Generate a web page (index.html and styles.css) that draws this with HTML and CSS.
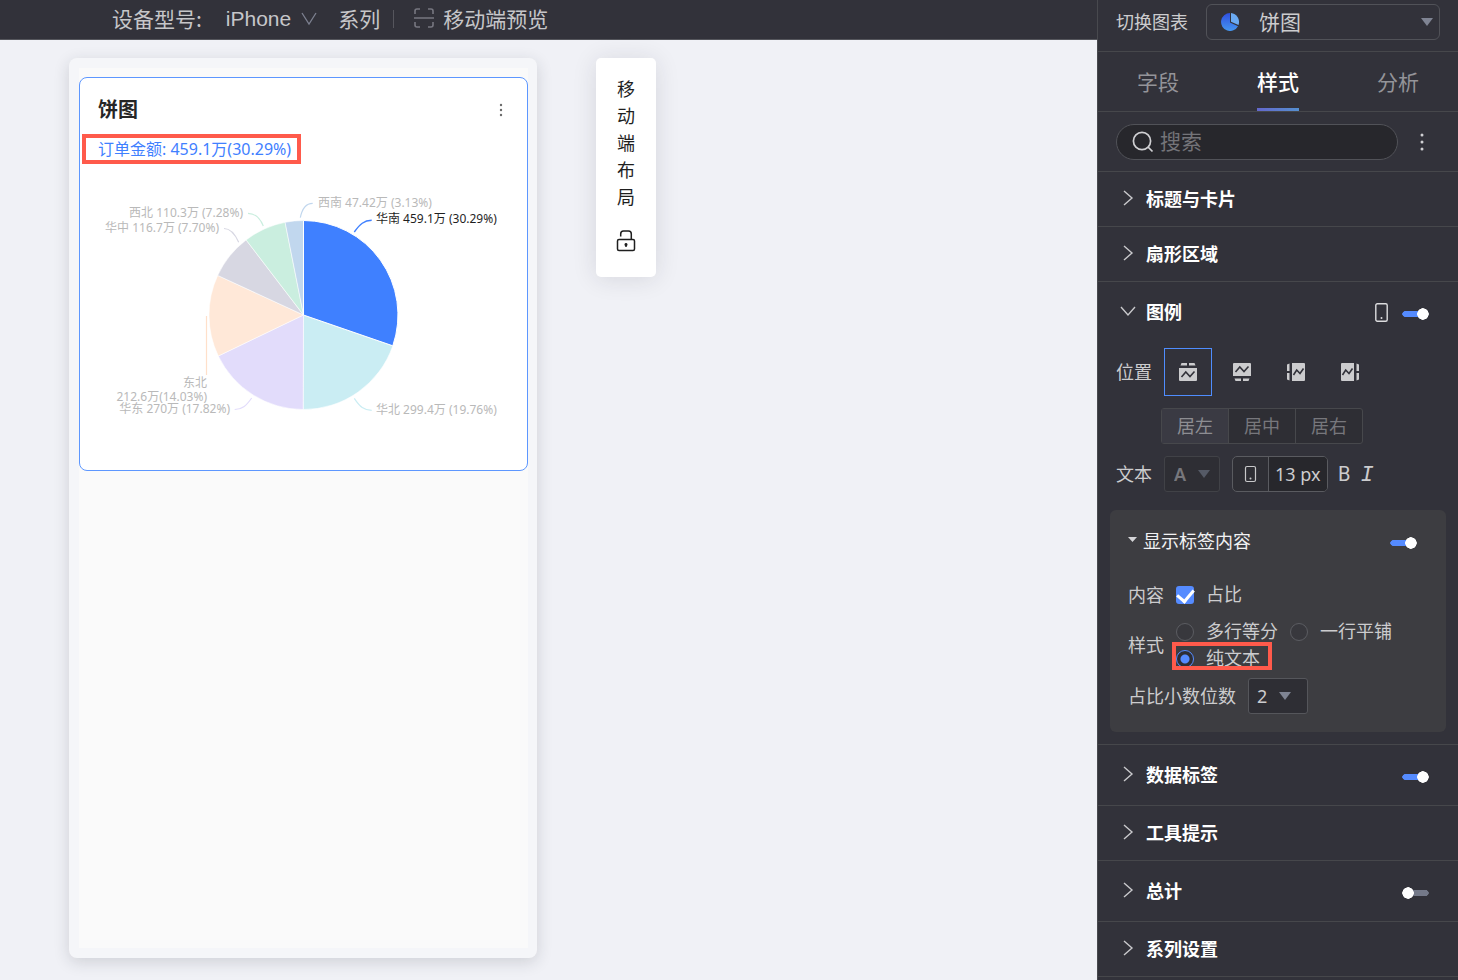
FILE: index.html
```html
<!DOCTYPE html>
<html lang="zh-CN">
<head>
<meta charset="utf-8">
<title>移动端布局</title>
<link rel="stylesheet" href="styles.css">
</head>
<body>
<div class="app">
  <main class="workspace">
    <header class="topbar">
      <span class="topbar-label">设备型号:</span>
      <button class="device" type="button">iPhone
        <svg width="16" height="14" viewBox="0 0 16 14"><path d="M1 1l7 11 7-11" fill="none" stroke="#7d8190" stroke-width="1.3"/></svg>
      </button>
      <span class="series">系列</span>
      <span class="bar"></span>
      <button class="preview" type="button">
        <svg width="20" height="20" viewBox="0 0 20 20"><path d="M1 6V3q0-2 2-2h3M14 1h3q2 0 2 2v3M1 14v3q0 2 2 2h3M14 19h3q2 0 2-2v-3M0 10h20" fill="none" stroke="#777780" stroke-width="1.6"/></svg>
        移动端预览
      </button>
    </header>
    <div class="canvas">
      <section class="phone">
        <div class="screen">
          <article class="chart-card">
            <div class="chart-head">
              <h2>饼图</h2>
              <button class="more" type="button" aria-label="更多"><svg width="4" height="14" viewBox="0 0 4 14" fill="#6b6b6b"><circle cx="2" cy="2" r="1.2"/><circle cx="2" cy="7" r="1.2"/><circle cx="2" cy="12" r="1.2"/></svg></button>
            </div>
            <p class="legend">订单金额: 459.1万(30.29%)<span class="mark mark-legend"></span></p>
            <svg class="pie" viewBox="0 0 447 300">
              <g stroke="#fff" stroke-opacity=".55" stroke-width="1">
                <path fill="#caedf3" d="M223.5 145L312.8 175.8A94.5 94.5 0 0 1 223.2 239.5z"/>
                <path fill="#e2dcfb" d="M223.5 145L223.2 239.5A94.5 94.5 0 0 1 138.3 186z"/>
                <path fill="#ffe8d8" d="M223.5 145L138.3 186A94.5 94.5 0 0 1 137.7 105.4z"/>
                <path fill="#d7d7e2" d="M223.5 145L137.7 105.4A94.5 94.5 0 0 1 166.1 69.9z"/>
                <path fill="#caeedf" d="M223.5 145L166.1 69.9A94.5 94.5 0 0 1 205.1 52.3z"/>
                <path fill="#c1d7ee" d="M223.5 145L205.1 52.3A94.5 94.5 0 0 1 223.5 50.5z"/>
              </g>
              <path fill="#3f80ff" stroke="#fff" d="M223.5 145L223.5 50.5A94.5 94.5 0 0 1 312.8 175.8z"/>
              <g fill="none" stroke-width="1.2">
                <path stroke="#c1d7ee" d="M220.3 47.7C222 39 226 33.3 232.7 33.3"/>
                <path stroke="#3f80ff" stroke-width="1.4" d="M274.3 62C280 54 284 50.5 291.7 50.3"/>
                <path stroke="#caeedf" d="M168 43.3C176 43.5 180 48 183.3 56"/>
                <path stroke="#d7d7e2" d="M144 58.5C151 58.5 155 64 158.7 72.3"/>
                <path stroke="#ffe0ca" d="M126.5 146V205"/>
                <path stroke="#e2dcfb" d="M154.7 239.5C162 239.5 166 236 171.7 228"/>
                <path stroke="#caedf3" d="M274.3 228.3C280 237 284 240 291.7 240.3"/>
              </g>
              <g class="pie-labels">
                <text x="238" y="37">西南 47.42万 (3.13%)</text>
                <text class="active" x="296" y="53">华南 459.1万 (30.29%)</text>
                <text class="left" x="163" y="47">西北 110.3万 (7.28%)</text>
                <text class="left" x="139" y="62">华中 116.7万 (7.70%)</text>
                <text class="left" x="127" y="217">东北</text>
                <text class="left" x="127" y="231">212.6万(14.03%)</text>
                <text class="left" x="150" y="243">华东 270万 (17.82%)</text>
                <text x="296" y="244">华北 299.4万 (19.76%)</text>
              </g>
            </svg>
          </article>
        </div>
      </section>
      <aside class="layout-tool">
        <span>移动端布局</span>
        <button type="button" aria-label="锁定"><svg width="20" height="22" viewBox="0 0 20 22" fill="none" stroke="#1f1f1f" stroke-width="1.5"><rect x="1.5" y="9.5" width="17" height="11" rx="1.5"/><path d="M4.7 6.6V4Q4.7 1 7.5 1H12.500Q15.300 1 15.300 4V9.500M10 13.500v3.500"/><circle cx="10" cy="14.500" r=".8"/></svg></button>
      </aside>
    </div>
  </main>

  <aside class="panel">
    <div class="switch-row">
      <label for="chart-type">切换图表</label>
      <div class="select-box chart-select">
        <svg class="pie-icon" width="18" height="18" viewBox="0 0 18 18"><defs><linearGradient id="pieBlue" x1="0" y1="0" x2="0" y2="1"><stop offset="0" stop-color="#2f4fe0"/><stop offset="1" stop-color="#4596ee"/></linearGradient></defs><path fill="url(#pieBlue)" d="M9 0A9 9 0 1 0 17 13.200L9 9.500z"/><path fill="#6baaf2" d="M10 0A9 9 0 0 1 17.500 12L10 8.700z"/></svg>
        <select id="chart-type"><option>饼图</option></select>
        <svg class="caret" width="12" height="8" viewBox="0 0 12 8"><path d="M0 0h12L6 8z"/></svg>
      </div>
    </div>

    <nav class="tabs">
      <button type="button">字段</button>
      <button type="button" class="current">样式</button>
      <button type="button">分析</button>
    </nav>

    <div class="search-row">
      <label class="search">
        <svg width="22" height="22" viewBox="0 0 22 22" fill="none" stroke="#d0d0d3" stroke-width="1.700"><circle cx="10" cy="10" r="8.600"/><path d="M16 16l4.500 4.500"/></svg>
        <input type="text" placeholder="搜索" aria-label="搜索">
      </label>
      <button class="more" type="button" aria-label="更多"><svg width="4" height="18" viewBox="0 0 4 18" fill="#d0d0d3"><circle cx="2" cy="2" r="1.500"/><circle cx="2" cy="9" r="1.500"/><circle cx="2" cy="16" r="1.500"/></svg></button>
    </div>

    <section class="group">
      <div class="group-head"><button type="button"><svg class="chev" viewBox="0 0 16 16"><path d="M4 0l8 7-8 7"/></svg>标题与卡片</button></div>
    </section>
    <section class="group">
      <div class="group-head"><button type="button"><svg class="chev" viewBox="0 0 16 16"><path d="M4 0l8 7-8 7"/></svg>扇形区域</button></div>
    </section>

    <section class="group open">
      <div class="group-head tall">
        <button type="button"><svg class="chev" viewBox="0 0 16 16"><path d="M1 3l7 8 7-8"/></svg>图例</button>
        <svg class="mobile" width="13" height="19" viewBox="0 0 13 19"><rect x=".8" y=".8" width="11.400" height="17.400" rx="1.500" fill="none" stroke="#dcdcde" stroke-width="1.400"/><circle cx="6.500" cy="15" r="1" fill="#dcdcde"/></svg>
        <input class="toggle" type="checkbox" role="switch" aria-label="图例" checked>
      </div>

      <div class="field field-position">
        <span class="field-label">位置</span>
        <div class="positions">
          <button type="button" class="selected" aria-label="上"><svg viewBox="0 0 18 18"><path class="solid" d="M2.500 0H8v2.500H1.500zM10 0h5.500l1 2.500H10zM0 5h18v12q0 1-1 1H1q-1 0-1-1z"/><path class="line" d="M2.500 14l4.300-5 4.200 4.500 4.500-5"/></svg></button>
          <button type="button" aria-label="下"><svg viewBox="0 0 18 18"><path class="solid" d="M1 0h16q1 0 1 1v12H0V1q0-1 1-1zM1.500 15.500H8V18H2.500zM10 15.500h6.500l-1 2.500H10z"/><path class="line" d="M2.500 9l4.300-5 4.200 4.500 4.500-5"/></svg></button>
          <button type="button" aria-label="左"><svg viewBox="0 0 18 18"><path class="solid" d="M0 1.500l2.500-1V8H0zM0 10h2.500v7.500l-2.500-1zM5 0h12q1 0 1 1v16q0 1-1 1H5z"/><path class="line" d="M6.500 12l3.200-5 3.300 3.500 3.500-5"/></svg></button>
          <button type="button" aria-label="右"><svg viewBox="0 0 18 18"><path class="solid" d="M1 0h12v18H1q-1 0-1-1V1q0-1 1-1zM15.500.5l2.500 1V8h-2.500zM15.500 10H18v6.500l-2.500 1z"/><path class="line" d="M1.500 12l3.200-5L8 10.500l3.500-5"/></svg></button>
        </div>
      </div>

      <div class="segments">
        <button type="button" class="selected">居左</button><button type="button">居中</button><button type="button">居右</button>
      </div>

      <div class="field">
        <label class="field-label" for="text-color">文本</label>
        <div class="select-box color-select">
          <select id="text-color"><option>A</option></select>
          <svg class="caret" width="12" height="8" viewBox="0 0 12 8"><path d="M0 0h12L6 8z"/></svg>
        </div>
        <div class="size-box">
          <svg width="35" height="34" viewBox="0 0 35 34"><rect x="12.500" y="9.500" width="10" height="15" rx="1.500" fill="none" stroke="#c8c8ca" stroke-width="1.200"/><circle cx="17.500" cy="21.500" r="1" fill="#c8c8ca"/></svg>
          <input type="text" value="13 px" aria-label="字号">
        </div>
        <button class="bold" type="button" aria-label="加粗">B</button>
        <button class="italic" type="button" aria-label="斜体">I</button>
      </div>

      <div class="subcard">
        <div class="sub-head">
          <button type="button"><svg width="9" height="9" viewBox="0 0 9 9"><path d="M0 0h9L4.500 5z" fill="#d5d5d8"/></svg>显示标签内容</button>
          <input class="toggle" type="checkbox" role="switch" aria-label="显示标签内容" checked>
        </div>
        <div class="sub-row">
          <span>内容</span>
          <label class="choice"><input class="check" type="checkbox" checked>占比</label>
        </div>
        <div class="sub-row style-row">
          <span>样式</span>
          <div class="radios">
            <label class="choice"><input class="radio" type="radio" name="style">多行等分</label>
            <label class="choice"><input class="radio" type="radio" name="style">一行平铺</label>
            <label class="choice"><input class="radio" type="radio" name="style" checked>纯文本<span class="mark mark-radio"></span></label>
          </div>
        </div>
        <div class="sub-row digits">
          <label for="digits">占比小数位数</label>
          <div class="select-box digit-select">
            <select id="digits"><option>2</option></select>
            <svg class="caret" width="12" height="8" viewBox="0 0 12 8"><path d="M0 0h12L6 8z"/></svg>
          </div>
        </div>
      </div>
    </section>

    <section class="group">
      <div class="group-head tall"><button type="button"><svg class="chev" viewBox="0 0 16 16"><path d="M4 0l8 7-8 7"/></svg>数据标签</button><input class="toggle" type="checkbox" role="switch" aria-label="数据标签" checked></div>
    </section>
    <section class="group">
      <div class="group-head"><button type="button"><svg class="chev" viewBox="0 0 16 16"><path d="M4 0l8 7-8 7"/></svg>工具提示</button></div>
    </section>
    <section class="group">
      <div class="group-head tall"><button type="button"><svg class="chev" viewBox="0 0 16 16"><path d="M4 0l8 7-8 7"/></svg>总计</button><input class="toggle" type="checkbox" role="switch" aria-label="总计"></div>
    </section>
    <section class="group">
      <div class="group-head"><button type="button"><svg class="chev" viewBox="0 0 16 16"><path d="M4 0l8 7-8 7"/></svg>系列设置</button></div>
    </section>
  </aside>
</div>
</body>
</html>
```
FILE: styles.css
```css
* { box-sizing: border-box; }
body {
  margin: 0;
  font-family: "Noto Sans", "Noto Sans CJK SC", sans-serif;
  font-size: 18px;
  line-height: 24px;
  color: #ccccce;
  background: #f0f1f6;
}
button, input, select { font: inherit; color: inherit; margin: 0; }
button { padding: 0; border: 0; background: none; display: flex; align-items: center; }
svg { display: block; flex: none; }

.app { display: flex; min-height: 100vh; }
.workspace { flex: 1; min-width: 0; display: flex; flex-direction: column; }

.topbar {
  display: flex;
  align-items: center;
  height: 40px;
  padding: 0 0 4px 112px;
  background: #32323a;
  border-bottom: 1px solid #55565c;
  font-family: "Noto Sans CJK SC", sans-serif;
  font-size: 21px;
  color: #c6c6c9;
}
.device { margin-left: 24px; gap: 10px; padding-top: 2px; font-family: "Liberation Sans", sans-serif; }
.series { margin-left: 21px; }
.bar { width: 1px; height: 18px; margin: 2px 20px 0 13px; background: #56565d; }
.preview { gap: 9px; }

.canvas { flex: 1; display: flex; align-items: flex-start; gap: 59px; padding: 18px 24px 22px 69px; }
.phone {
  align-self: stretch;
  width: 468px;
  padding: 10px 9px 10px 10px;
  border-radius: 8px;
  background: #f5f6f9;
  box-shadow: 0 4px 16px rgba(30, 35, 50, .16);
}
.screen { height: 100%; padding-top: 9px; background: #fafafa; }
.chart-card { border: 1px solid #5d97ff; border-radius: 8px; background: #fff; }
.chart-head { display: flex; justify-content: space-between; align-items: center; padding: 18px 24px 0 18px; }
.chart-head h2 { margin: 0; font-size: 20px; line-height: 28px; font-weight: 600; color: #262626; }
.legend { position: relative; width: max-content; margin: 13px 0 9px 18px; font-size: 16px; color: #3f80ff; }
.mark { position: absolute; border: 4px solid #ff5a4b; pointer-events: none; }
.mark-legend { inset: -3px -10px -3px -16px; }
.pie { width: 100%; }
.pie-labels { font-size: 12px; fill: #b9b9b9; }
.pie-labels .active { fill: #1f1f1f; }
.pie-labels .left { text-anchor: end; }

.layout-tool {
  display: flex;
  flex-direction: column;
  align-items: center;
  gap: 19px;
  width: 60px;
  padding: 18px 20px 25px;
  border-radius: 5px;
  background: #fff;
  color: #1f1f1f;
  line-height: 27px;
  text-align: center;
  box-shadow: 0 2px 24px rgba(30, 35, 50, .12);
}
.layout-tool span { width: 18px; }

.panel { width: 361px; flex: none; background: #32323a; border-left: 1px solid #48494e; }
.switch-row, .search-row, .group, .tabs { border-bottom: 1px solid #46474b; }
.switch-row { display: flex; align-items: center; gap: 18px; height: 52px; padding: 0 18px 7px; }
.select-box { display: grid; align-items: center; border: 1px solid #515258; border-radius: 3px; }
.select-box > * { grid-area: 1 / 1; }
.select-box select { width: 100%; height: 34px; padding: 0; border: 0; outline: 0; background: none; appearance: none; }
.caret { justify-self: end; fill: #7f8493; pointer-events: none; }
.chart-select { flex: 1; border-radius: 6px; }
.chart-select select { padding-left: 52px; font-size: 21px; }
.chart-select .caret { margin-right: 6px; }
.pie-icon { margin-left: 14px; }

.tabs { display: grid; grid-template-columns: repeat(3, 1fr); justify-items: center; height: 60px; }
.tabs button { height: 59px; padding-top: 4px; font-size: 21px; color: #949499; border-bottom: 3px solid transparent; }
.tabs .current {
  color: #fff;
  font-weight: 500;
  border-image: linear-gradient(90deg, #6467cc, #5590d0) 1;
  border-width: 0 0 3px;
}

.search-row { display: flex; align-items: center; gap: 22px; height: 60px; padding: 0 18px; }
.search { width: 282px; height: 36px; display: flex; align-items: center; gap: 6px; padding: 0 15px; border: 1px solid #515258; border-radius: 18px; background: #27272c; }
.search input { min-width: 0; flex: 1; padding: 0 0 2px; border: 0; outline: 0; background: none; font-size: 21px; line-height: 30px; }
.search input::placeholder { color: #747479; opacity: 1; }

.group-head { display: flex; align-items: center; height: 54px; padding: 0 29px 0 22px; }
.group-head.tall { height: 60px; }
.group-head button { flex: 1; gap: 10px; font-weight: 700; color: #fff; }
.chev { width: 16px; height: 16px; fill: none; stroke: #c9c9cc; stroke-width: 1.4; overflow: visible; }
.mobile { margin-right: 14px; }
.toggle {
  appearance: none;
  width: 27px;
  height: 12px;
  margin-top: 3px;
  border-radius: 6px;
  background:
    radial-gradient(circle at 6px 6px, #fff 5.5px, transparent 6px),
    linear-gradient(#747989, #747989) 8px 3px / 17px 6px no-repeat,
    radial-gradient(circle at 24px 6px, #747989 2.5px, transparent 3px);
}
.toggle:checked {
  background:
    radial-gradient(circle at 21px 6px, #fff 5.5px, transparent 6px),
    linear-gradient(#558bff, #558bff) 3px 3px / 17px 6px no-repeat,
    radial-gradient(circle at 3px 6px, #558bff 2.5px, transparent 3px);
}

.open { padding-bottom: 12px; }
.field { display: flex; align-items: center; padding: 0 18px; }
.field-position { padding-top: 6px; }
.field-label { width: 48px; }
.positions { display: flex; gap: 6px; }
.positions button { width: 48px; height: 48px; justify-content: center; }
.positions .selected { border: 1px solid #4f8dff; }
.positions svg { width: 18px; height: 18px; }
.solid { fill: #ccccce; }
.line { fill: none; stroke: #32323a; stroke-width: 1.6; }
.segments { display: flex; width: 202px; margin: 12px 0 12px 63px; color: #77777c; border: 1px solid #47484c; border-radius: 3px; background: #2e2e34; }
.segments button { flex: 1; height: 34px; justify-content: center; }
.segments button + button { border-left: 1px solid #47484c; }
.segments .selected { background: #3a3a43; color: #8d8d92; }
.color-select { width: 56px; border-color: #414247; background: #2e2e34; }
.color-select select { padding-left: 9px; font-weight: 600; color: #77777c; }
.color-select .caret { margin-right: 9px; fill: #555a66; }
.size-box { display: flex; width: 96px; margin: 0 10px 0 12px; border: 1px solid #5a5b60; border-radius: 5px; background: #2e2e34; overflow: hidden; }
.size-box input { width: 59px; height: 34px; padding: 0 0 0 6px; border: 0; border-left: 1px solid #5a5b60; outline: 0; background: #27272c; }
.bold { font-family: Roboto, sans-serif; font-size: 20px; }
.italic { margin-left: 10px; padding-top: 4px; font-family: "Liberation Mono", monospace; font-size: 22px; font-style: italic; }

.subcard { margin: 18px 12px 0; padding: 18px; border-radius: 6px; background: #3d3d41; }
.sub-head { display: flex; align-items: center; justify-content: space-between; padding-right: 11px; margin-bottom: 27px; }
.sub-head button { gap: 6px; color: #f2f2f3; height: 26px; }
.sub-row { display: flex; align-items: center; gap: 12px; margin-bottom: 10px; }
.style-row { margin-bottom: 6px; }
.choice { position: relative; display: flex; align-items: center; gap: 12px; line-height: 27px; }
.radios { display: flex; flex-wrap: wrap; column-gap: 12px; flex: 1; }
.digits { margin-bottom: 0; }
.check, .radio { appearance: none; width: 18px; height: 18px; }
.check {
  border-radius: 3px;
  background: #558bff;
  display: grid;
  place-items: center;
}
.check::before { content: ""; width: 8px; height: 13px; margin-bottom: 4px; border: solid #fff; border-width: 0 3px 3px 0; rotate: 40deg; }
.radio { border: 1px solid #5c5d62; border-radius: 50%; background: #38383d; }
.radio:checked { border-color: #558bff; background: radial-gradient(circle, #558bff 4px, #2e2e34 5px); }
.mark-radio { inset: -3px -12px 2px -4px; }
.digit-select { width: 60px; background: #2e2e34; border-color: #55565b; }
.digit-select select { padding-left: 8px; }
.digit-select .caret { margin-right: 16px; }
```
